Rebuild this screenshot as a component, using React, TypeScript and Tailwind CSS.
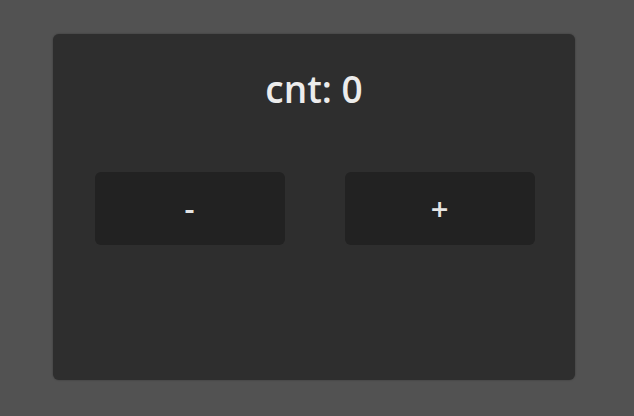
import { useState } from 'react';

export default function App() {
    const [cnt, setCnt] = useState(0);

    return (
        <div className="w-[634px] h-[416px] bg-[#525252] pt-[34px] pl-[53px]" style={{ fontFamily: '"Open Sans", sans-serif' }}>
            <div className="w-[522px] h-[346px] bg-[#2e2e2e] rounded-[6px] shadow-[0_0_2px_rgba(0,0,0,0.35)] flex flex-col items-center">
                <div className="mt-[32px] h-[44px] flex items-center text-[37px] font-semibold text-[#ececec] leading-none">
                    cnt: {cnt}
                </div>
                <div className="mt-[62px] flex gap-[60px] pl-[1px]">
                    <button
                        onClick={() => setCnt(cnt - 1)}
                        className="w-[190px] h-[73px] bg-[#222222] rounded-[6px] text-[31px] font-semibold text-[#e4e4e4] flex items-center justify-center cursor-pointer"
                    >
                        -
                    </button>
                    <button
                        onClick={() => setCnt(cnt + 1)}
                        className="w-[190px] h-[73px] bg-[#222222] rounded-[6px] text-[31px] font-semibold text-[#e4e4e4] flex items-center justify-center cursor-pointer"
                    >
                        +
                    </button>
                </div>
            </div>
        </div>
    );
}
